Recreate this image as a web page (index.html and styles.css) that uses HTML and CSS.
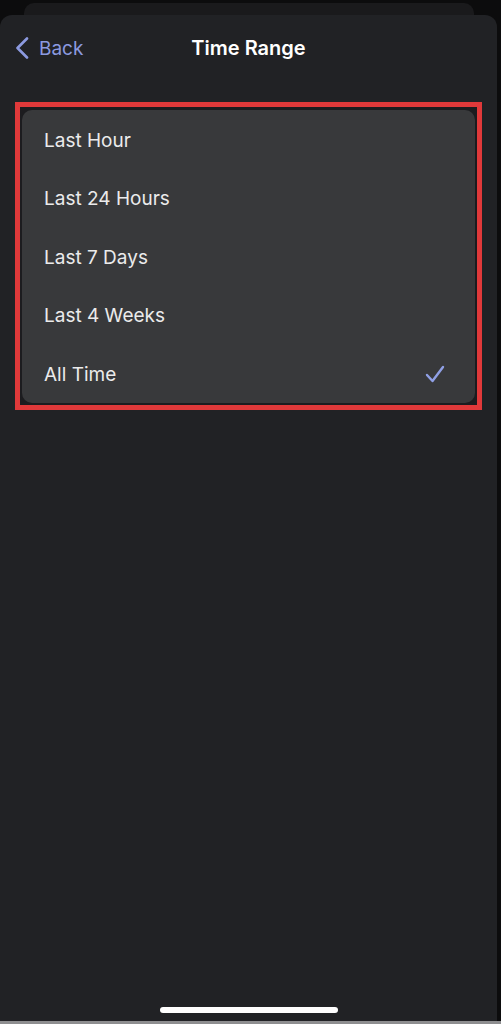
FILE: index.html
```html
<html>
  <head>
    <meta name="viewport" content="width=501px">
    <link rel="stylesheet" href="styles.css">
    <title>Time Range</title>
  </head>
  <body>
    <div class="behind"></div>
    <div class="sheet">
      <div class="header">
        <a class="back">
          <svg width="14" height="22" viewBox="0 0 14 22">
            <path d="M12 1.5 L2.5 11 L12 20.5" fill="none" stroke="currentColor" stroke-width="2.6" stroke-linecap="round" stroke-linejoin="round"/>
          </svg>
          <span>Back</span>
        </a>
        <div class="title">Time Range</div>
        <div></div>
      </div>

      <div class="highlight">
        <div class="options">
          <div class="row">Last Hour</div>
          <div class="row">Last 24 Hours</div>
          <div class="row">Last 7 Days</div>
          <div class="row">Last 4 Weeks</div>
          <div class="row">All Time
            <svg class="check" width="20" height="18" viewBox="0 0 20 18">
              <path d="M2 10 L7.5 16 L18 2" fill="none" stroke="currentColor" stroke-width="2.4" stroke-linecap="round" stroke-linejoin="round"/>
            </svg>
          </div>
        </div>
      </div>

      <div class="home"></div>
    </div>
    <div class="edge"></div>
  </body>
</html>
```
FILE: styles.css
```css
body {
  margin: 0;
  width: 501px;
  height: 1024px;
  overflow: hidden;
  background-color: #0c0c0d;
  font-family: 'Inter', 'Noto Sans', sans-serif;
}

.behind {
  height: 12px;
  margin: 3px 27px 0 24px;
  background-color: #1a1a1c;
  border-radius: 10px 10px 0 0;
}

.sheet {
  width: 497px;
  height: 1006px;
  background-color: #212225;
  border-radius: 12px 12px 0 0;
  display: flex;
  flex-direction: column;
}

.header {
  height: 66px;
  display: grid;
  grid-template-columns: 1fr auto 1fr;
  align-items: center;
}

.back {
  display: flex;
  align-items: center;
  gap: 10px;
  padding-left: 15px;
  color: #8c9ae0;
  font-size: 19px;
}

.title {
  color: #ffffff;
  font-size: 20px;
  font-weight: 600;
}

.highlight {
  margin: 21px 15px 0 15px;
  border: 5px solid #e0393a;
  padding: 3px 2px 2px 2px;
  background-color: #1c1c1f;
}

.options {
  background-color: #38393b;
  border-radius: 10px;
}

.row {
  height: 58.5px;
  box-sizing: border-box;
  padding: 2px 30px 0 22px;
  display: flex;
  align-items: center;
  justify-content: space-between;
  color: #ebebeb;
  font-size: 19px;
}

.check {
  color: #90a0e6;
}

.home {
  margin: auto auto 8px auto;
  width: 178px;
  height: 6px;
  border-radius: 3px;
  background-color: #ffffff;
}

.edge {
  height: 3px;
  background-color: #8e8e90;
}
```
